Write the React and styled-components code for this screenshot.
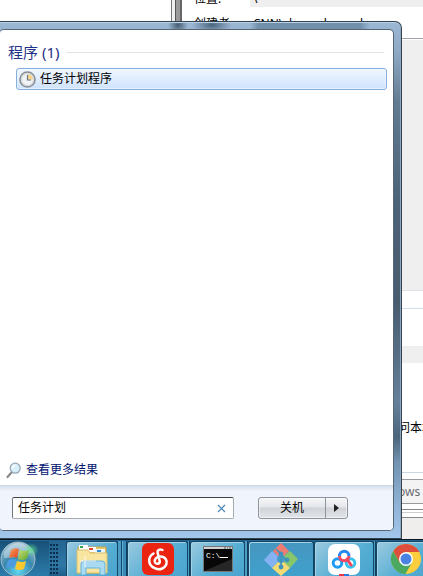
import React from 'react';
import styled, { createGlobalStyle } from 'styled-components';

const Global = createGlobalStyle`
  * { box-sizing: border-box; }
  body { margin: 0; font: 12px/16px "Noto Sans", "Noto Sans CJK SC", sans-serif; color: #000; }
  button, input { font: inherit; color: inherit; padding: 0; margin: 0; }
`;
const Desktop = styled.div`
  position: relative; height: 100vh; display: flex; flex-direction: column; overflow: hidden; background: #fff;
`;
const Windows = styled.main`
  flex: 1; min-height: 0; display: grid; grid-template-columns: 171px 11px 1fr; overflow: hidden;
`;
const LeftPane = styled.div`background: #fff;`;
const Splitter = styled.div`
  background: linear-gradient(90deg, #777 0 1px, #f0f0f0 1px 4px, #555 4px 5px, #999 5px 9px, #666 9px 11px);
`;
const RightPane = styled.section`display: flex; flex-direction: column; min-width: 0; white-space: nowrap;`;
const Property = styled.div`
  display: flex; height: ${p => p.$h}px; align-items: flex-end; flex: none;
  padding-left: 12px;
`;
const Label = styled.span`width: 56px; flex: none;`;
const Value = styled.span`flex: 1; padding-left: 3px; background: ${p => p.$shade ? '#efefef' : 'none'};`;
const Strip = styled.div`
  flex: none; height: ${p => p.$h}px; background: ${p => p.$bg || '#fff'};
  border-top: ${p => p.$line ? `1px solid ${p.$line}` : 0};
  padding-left: 216px; overflow: hidden;
  display: flex; align-items: center;
  color: ${p => p.$ink || '#000'};
`;
const Menu = styled.section`
  position: absolute; left: 0; right: 21px; top: 21px; bottom: 37px;
  border: 1px solid #34434f; border-left: 0; border-radius: 0 7px 0 0;
  box-shadow: inset 0 1px #b9d2e8, inset -1px 0 #8da6bc;
  padding: 7px 7px 7px 0; display: flex;
  background:
    radial-gradient(ellipse 10px 9px at 178px 3px, #465b70, transparent),
    radial-gradient(ellipse 20px 8px at 212px 3px, #4b647c, transparent),
    linear-gradient(90deg, transparent 250px, #7390ab 258px 360px, transparent 370px) 0 0 / 100% 7px no-repeat,
    linear-gradient(#9bb8d4, #8da9c4 30px, #627b92 80px, #4c6276 180px, #485c6f 280px, #65809a 380px, #4b657d 415px, #7293b1 440px, #91b4d8 485px, #a3c6eb);
`;
const Panel = styled.div`
  flex: 1; min-width: 0; display: flex; flex-direction: column; overflow: hidden;
  border: 1px solid #566675; border-left: 0; border-radius: 4px 5px 5px 4px; background: #fff;
`;
const Results = styled.div`flex: 1; padding: 12px 6px 0 8px;`;
const Heading = styled.h2`
  margin: 0; font-size: 15px; line-height: 20px; font-weight: 400; color: #1e3287;
  display: flex; align-items: center; gap: 7px;
  &::after { content: ''; flex: 1; height: 1px; background: #e2e2e2; margin-right: 3px; }
`;
const Result = styled.button`
  display: flex; align-items: center; gap: 4px; height: 22px; width: calc(100% - 8px);
  margin: 6px 0 0 8px; padding-left: 2px; border: 1px solid #84acdd; border-radius: 3px;
  background: linear-gradient(#f0f7ff, #cfe3fd); box-shadow: inset 0 0 0 1px #f3f8ff99;
`;
const More = styled.a`
  display: flex; align-items: center; gap: 4px; height: 30px; padding-left: 6px;
  color: #00136f; text-decoration: none;
`;
const Footer = styled.footer`
  display: flex; align-items: center; height: 45px; padding: 0 45px 0 12px; gap: 24px;
  background: linear-gradient(#d3dfec, #f0f4fc 5px); border-top: 1px solid #ccd9e8;
`;
const Search = styled.form`
  flex: 1; display: flex; height: 22px; background: #fff; border: 1px solid #a7abb2; border-top-color: #40454c;
  border-left-color: #777; border-radius: 2px;
  input { flex: 1; min-width: 0; border: 0; outline: 0; background: none; padding-left: 5px; }
  button { width: 24px; border: 0; background: none; display: grid; place-items: center; }
`;
const Split = styled.div`
  display: flex; height: 22px; border: 1px solid #8e939b; border-radius: 3px;
  background: linear-gradient(#f5f6f8, #e4e6ea 45%, #cfd3d8 50%, #e2e5e9);
  box-shadow: inset 0 0 0 1px #fff8;
`;
const SplitButton = styled.button`
  width: ${p => p.$w}px; border: 0; background: none; display: grid; place-items: center;
  & + & { border-left: 1px solid #8e939b; }
`;
const Taskbar = styled.nav`
  height: 37px; flex: none; display: flex; border-top: 1px solid #071722; padding-top: 1px;
  background: linear-gradient(#23638f, #2f78a6 70%, #1d5d8b); overflow: hidden;
`;
const Start = styled.button`
  width: 49px; flex: none; border: 0; background: linear-gradient(#185178, #2c7cab); display: flex;
`;
const Grip = styled.div`
  width: 9px; margin: 3px 8px 2px 0; flex: none;
  background: conic-gradient(#0b2f4a 25%, transparent 0) 0 0 / 3px 4px;
`;
const Task = styled.button`
  width: ${p => p.$w}px; flex: none;
  display: flex; justify-content: center; align-items: center; border: 1px solid #144564; border-bottom: 0;
  border-radius: 3px 3px 0 0; overflow: hidden;
  box-shadow: inset 1px 1px #a5d4e8;
  background: ${p => p.$open ? 'linear-gradient(135deg, #9bcae0, #55add3 60%, #49a4ce)' : 'linear-gradient(#4596bf, #40a1cd)'};
  svg { flex: none; }
`;
const Stack = styled.div`
  width: ${p => p.$w || 9}px; flex: none; border-right: 1px solid #0f4060;
  background: linear-gradient(90deg, #4b9dc6 0 3px, #12486c 3px 4px, #62aed0 4px 5px, #3a8ab6 5px);
`;

const Clock = () => <svg width="17" height="17" viewBox="0 0 17 17"><circle cx="8.5" cy="8.5" r="7.5" fill="#eff3f5" stroke="#8b8e92" strokeWidth="1.6"/><path d="M8.5 8.5V3a5.5 5.5 0 0 1 5.5 5.5Z" fill="#f7d68f"/><circle cx="8.5" cy="8.5" r="6" fill="none" stroke="#d2d5d8" strokeWidth="1"/><path d="M8.5 4v5H12" fill="none" stroke="#6b7480" strokeWidth="1.2"/></svg>;
const Magnifier = () => <svg width="16" height="17" viewBox="0 0 16 17"><path d="M5.5 10.5 1.5 15" stroke="#8a8888" strokeWidth="2.2" strokeLinecap="round"/><circle cx="9.2" cy="6.2" r="5" fill="#d9f0fc" stroke="#93a3b0" strokeWidth="1.2"/><path d="M6.3 6.5a3 3 0 0 1 3-3" fill="none" stroke="#fff" strokeWidth="1.5"/></svg>;
const Orb = () => (
  <svg width="38" height="36" viewBox="0 0 38 36">
    <defs>
      <radialGradient id="orb" cx=".5" cy=".85" r=".85"><stop stopColor="#5ed8f2"/><stop offset=".5" stopColor="#3a87ad"/><stop offset="1" stopColor="#a8c6d5"/></radialGradient>
      <linearGradient id="red" x2="1" y2="1"><stop stopColor="#f9a45d"/><stop offset="1" stopColor="#e0401c"/></linearGradient>
      <linearGradient id="green" x2="1" y2="1"><stop stopColor="#c8e070"/><stop offset="1" stopColor="#5ba531"/></linearGradient>
      <radialGradient id="glow"><stop stopColor="#63e08c" stopOpacity=".8"/><stop offset="1" stopColor="#63e08c" stopOpacity="0"/></radialGradient>
    </defs>
    <circle cx="18" cy="18" r="17" fill="url(#orb)" stroke="#a1bdc9"/>
    <path d="M4 11Q18-7 32 11q-12 6-28 6Z" fill="#fff" opacity=".35"/>
    <ellipse cx="31" cy="9" rx="8" ry="7" fill="url(#glow)"/>
    <path d="M11 9q4-3 8-1l-2 9q-4-2-8 0Z" fill="url(#red)"/>
    <path d="M20 9q5 2 9 0l-2 9q-5 2-9 0Z" fill="url(#green)"/>
    <path d="M8 19q4-2 8 0l-2 8q-4-2-8 0Z" fill="#4c9be0"/>
    <path d="M17 20q5 2 9 0l-2 8q-5 2-9 0Z" fill="#fbc82f"/>
  </svg>
);
const Folder = () => <svg width="34" height="32" viewBox="0 0 34 32"><path d="M3 4h28v26H3Z" fill="#e9c967" stroke="#c9a849"/><path d="M4 2h9v5H4Z" fill="#fff"/><path d="M5 3h3v2H5Z" fill="#31a84c"/><path d="M12 4h9v5h-9Z" fill="#fff"/><path d="M14 5h4v2h-4Z" fill="#e14b30"/><path d="M20 6h10v5H20Z" fill="#eef7ff"/><path d="M22 7h4v2h-4Z" fill="#348bd2"/><path d="M2 7h11l2 3h17v20H2Z" fill="#f7e5a0" stroke="#dcc06c"/><path d="M6 32V21q0-3 3-3h18q3 0 3 3v11h-5v-7H11v7Z" fill="#a9daf2" stroke="#67b3df"/><path d="M5 18h16M10 13v11" stroke="#fff" opacity=".8"/></svg>;
const Music = () => <svg width="32" height="32" viewBox="0 0 32 32"><rect width="32" height="32" rx="6" fill="#ea2410"/><path d="M20.5 7c-3-1.500-5.500.300-4.800 3l2 8c.6 3-4 4-4.800 1-.7-3 2-5.500 5.500-5.500 5 0 7.200 4 6 7.700-1.600 4.600-7 6-11.200 4.200C5.500 22.500 5.500 14 11.500 10.500" fill="none" stroke="#fff" strokeWidth="2.5" strokeLinecap="round"/></svg>;
const Terminal = () => <svg width="30" height="26" viewBox="0 0 30 26"><path d="M.5.5h29v25H.5Z" fill="#080808" stroke="#777"/><path d="M1 1h28v2H1Z" fill="#d0d2d3"/><path d="M21 2h2m1 0h1m1 0h2" stroke="#555"/><path d="m1 25 28-12v12Z" fill="#fff" opacity=".12"/><text x="3" y="12" fill="#fff" fontFamily="Liberation Mono" fontSize="8">C:\</text><path d="M17 11.5h8" stroke="#fff"/></svg>;
const Git = () => <svg width="34" height="34" viewBox="0 0 34 34"><path d="m17 1 8 8-5 5q-3-3-6 0L9 9Z" fill="#ef7c73"/><path d="m8 9 6 5q-2 3 0 6l-6 6-8-8Z" fill="#84b2f2"/><path d="m26 9 8 8-8 9-6-6q2-3 0-6Z" fill="#87c66a"/><path d="m8 26 6-6q3 2 6 0l6 6-9 8Z" fill="#f6da73"/><path d="m12 7 5 5v13m0-12 6 5" fill="none" stroke="#3f93bd" strokeWidth="1.6"/><g fill="#3f93bd"><circle cx="17" cy="12" r="2.4"/><circle cx="17" cy="25" r="2.4"/><circle cx="23" cy="18" r="2.4"/></g></svg>;
const Cloud = () => <svg width="32" height="33" viewBox="0 0 32 33"><rect width="32" height="31" y="1" rx="7" fill="#fff"/><g fill="none" strokeWidth="3"><circle cx="9.5" cy="20" r="4.3" stroke="#1e9cf2"/><circle cx="22.5" cy="20" r="4.3" stroke="#37c3ee"/><path d="M11.500 13a4.700 4.700 0 0 1 9.400 0" stroke="#2688f0"/><path d="M11.500 13a4.700 4.700 0 0 0 9.400 0" stroke="#f34860"/><path d="m19 16 4 6" stroke="#f34860" strokeLinecap="round"/></g><path d="M11 31h5v2h-5Z" fill="#ee3448"/><path d="M16 31h5v2h-5Z" fill="#247de5"/></svg>;
const Chrome = () => <svg width="32" height="32" viewBox="0 0 32 32"><circle cx="16" cy="16" r="15" fill="#fccd3d"/><path d="M3.3 8 9.94 19.5 16 16l6.06 3.5L15.4 31A15 15 0 0 1 3.3 8Z" fill="#4aa861"/><path d="M16 9h13.3A15 15 0 0 0 3.3 8l6.64 11.5L16 16Z" fill="#de4e3c"/><circle cx="16" cy="16" r="7" fill="#fff"/><circle cx="16" cy="16" r="5.5" fill="#4b83e3"/></svg>;

export default function App() {
  return <><Global /><Desktop>
    <Windows>
      <LeftPane /><Splitter />
      <RightPane>
        <Property $h={7}><Label>位置:</Label><Value $shade>\</Value></Property>
        <Property $h={25}><Label>创建者:</Label><Value>CNN\zhangchenggl</Value></Property>
        <Strip $h={6} /><Strip $h={2} $line="#a2a4ad" /><Strip $h={250} $bg="#efefef" />
        <Strip $h={18} $line="#dfe1eb" /><Strip $h={38} $line="#d2deeb" /><Strip $h={17} $bg="#efefef" />
        <Strip $h={56} /><Strip $h={18}>问本地计算机</Strip><Strip $h={35} />
        <Strip $h={7} $line="#c9d5e2" /><Strip $h={24} $bg="#f3f3f3" $line="#999" $ink="#6b6e72">ows</Strip>
        <Strip $h={6} $line="#999" /><Strip $h={3} $line="#88878d" /><Strip $h={5} $line="#ccc" />
        <Strip $h={25} $bg="#f0eded" $line="#888" />
      </RightPane>
    </Windows>
    <Menu aria-label="开始菜单"><Panel>
      <Results><Heading>程序 (1)</Heading><Result><Clock />任务计划程序</Result></Results>
      <More href="#results"><Magnifier />查看更多结果</More>
      <Footer>
        <Search><input aria-label="搜索程序和文件" defaultValue="任务计划" /><button type="button" aria-label="清除"><svg width="9" height="9" viewBox="0 0 9 9"><path d="m1 1 7 7m0-7-7 7" stroke="#4a87b5" strokeWidth="1.2"/></svg></button></Search>
        <Split><SplitButton $w={66}>关机</SplitButton><SplitButton $w={22} aria-label="关机选项"><svg width="5" height="8" viewBox="0 0 5 8"><path d="m0 0 5 4-5 4Z" fill="#222"/></svg></SplitButton></Split>
      </Footer>
    </Panel></Menu>
    <Taskbar aria-label="任务栏">
      <Start aria-label="开始"><Orb /></Start><Grip />
      <Task $w={52} $open aria-label="资源管理器"><Folder /></Task><Stack />
      <Task $w={61} $open aria-label="音乐"><Music /></Task><Stack $w={2} />
      <Task $w={55} $open aria-label="命令提示符"><Terminal /></Task><Stack $w={3} />
      <Task $w={66} aria-label="Git"><Git /></Task>
      <Task $w={60} $open aria-label="网盘"><Cloud /></Task><Stack $w={2} />
      <Task $w={60} $open aria-label="Chrome"><Chrome /></Task>
    </Taskbar>
  </Desktop></>;
}
